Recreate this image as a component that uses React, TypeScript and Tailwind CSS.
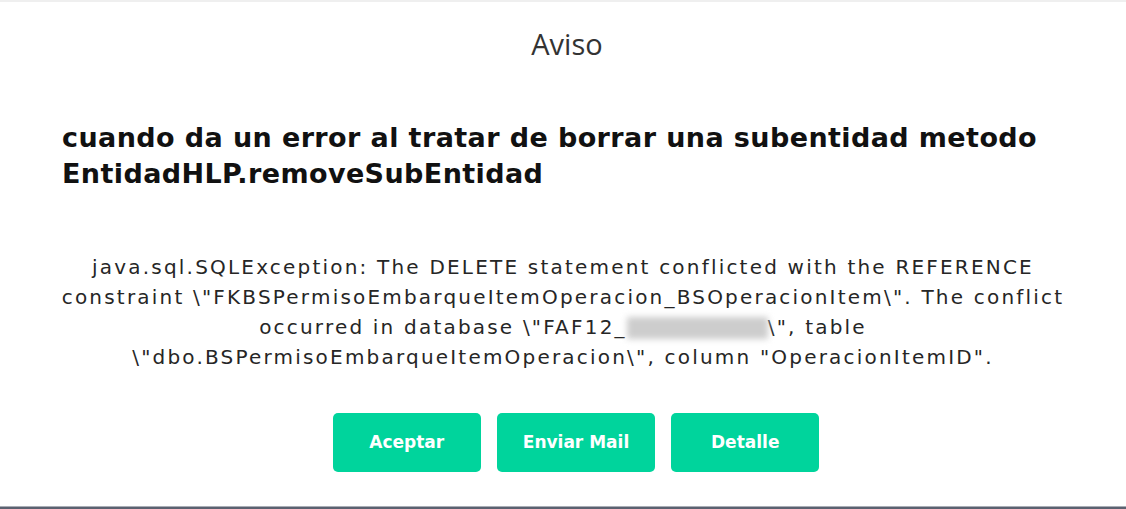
import React from 'react';

const bodyLines = [
  'java.sql.SQLException: The DELETE statement conflicted with the REFERENCE',
  'constraint \\"FKBSPermisoEmbarqueItemOperacion_BSOperacionItem\\". The conflict',
];

function ActionButton({ label }: { label: string }) {
  return (
    <button
      type="button"
      className="h-[59px] min-w-[148px] px-[26px] rounded-[5px] bg-[#00d49c] text-white text-[17px] font-bold font-['DejaVu_Sans',sans-serif]"
    >
      {label}
    </button>
  );
}

export default function App() {
  return (
    <div className="w-[1126px] h-[509px] bg-white flex flex-col overflow-hidden">
      <div className="h-[2px] bg-[#efefef]" />

      <main className="flex-1 flex flex-col">
        <h2 className="mt-[27px] pl-[8px] text-center text-[29px] leading-none text-[#333333] font-['Open_Sans',sans-serif]">
          Aviso
        </h2>

        <h1 className="mt-[62px] pl-[62px] text-[27px] leading-[36px] font-bold tracking-[0.4px] text-[#111111] font-['DejaVu_Sans',sans-serif]">
          <span className="block">cuando da un error al tratar de borrar una subentidad metodo</span>
          <span className="block">EntidadHLP.removeSubEntidad</span>
        </h1>

        <p className="mt-[60px] text-center text-[20px] leading-[30px] tracking-[2.2px] text-[#262626] font-['DejaVu_Sans',sans-serif]">
          {bodyLines.map((line) => (
            <span key={line} className="block">
              {line}
            </span>
          ))}
          <span className="block">
            {'occurred in database \\"FAF12_'}
            <span className="inline-block w-[141px] h-[22px] align-[-5px] bg-[#cdcdcd] blur-[3px]" />
            {'\\", table'}
          </span>
          <span className="block">{'\\"dbo.BSPermisoEmbarqueItemOperacion\\", column "OperacionItemID".'}</span>
        </p>

        <div className="mt-[41px] pl-[26px] flex justify-center gap-4">
          <ActionButton label="Aceptar" />
          <ActionButton label="Enviar Mail" />
          <ActionButton label="Detalle" />
        </div>
      </main>

      <div className="h-[3px] border-t border-[#a9adb5] bg-[#5b6170]" />
    </div>
  );
}
